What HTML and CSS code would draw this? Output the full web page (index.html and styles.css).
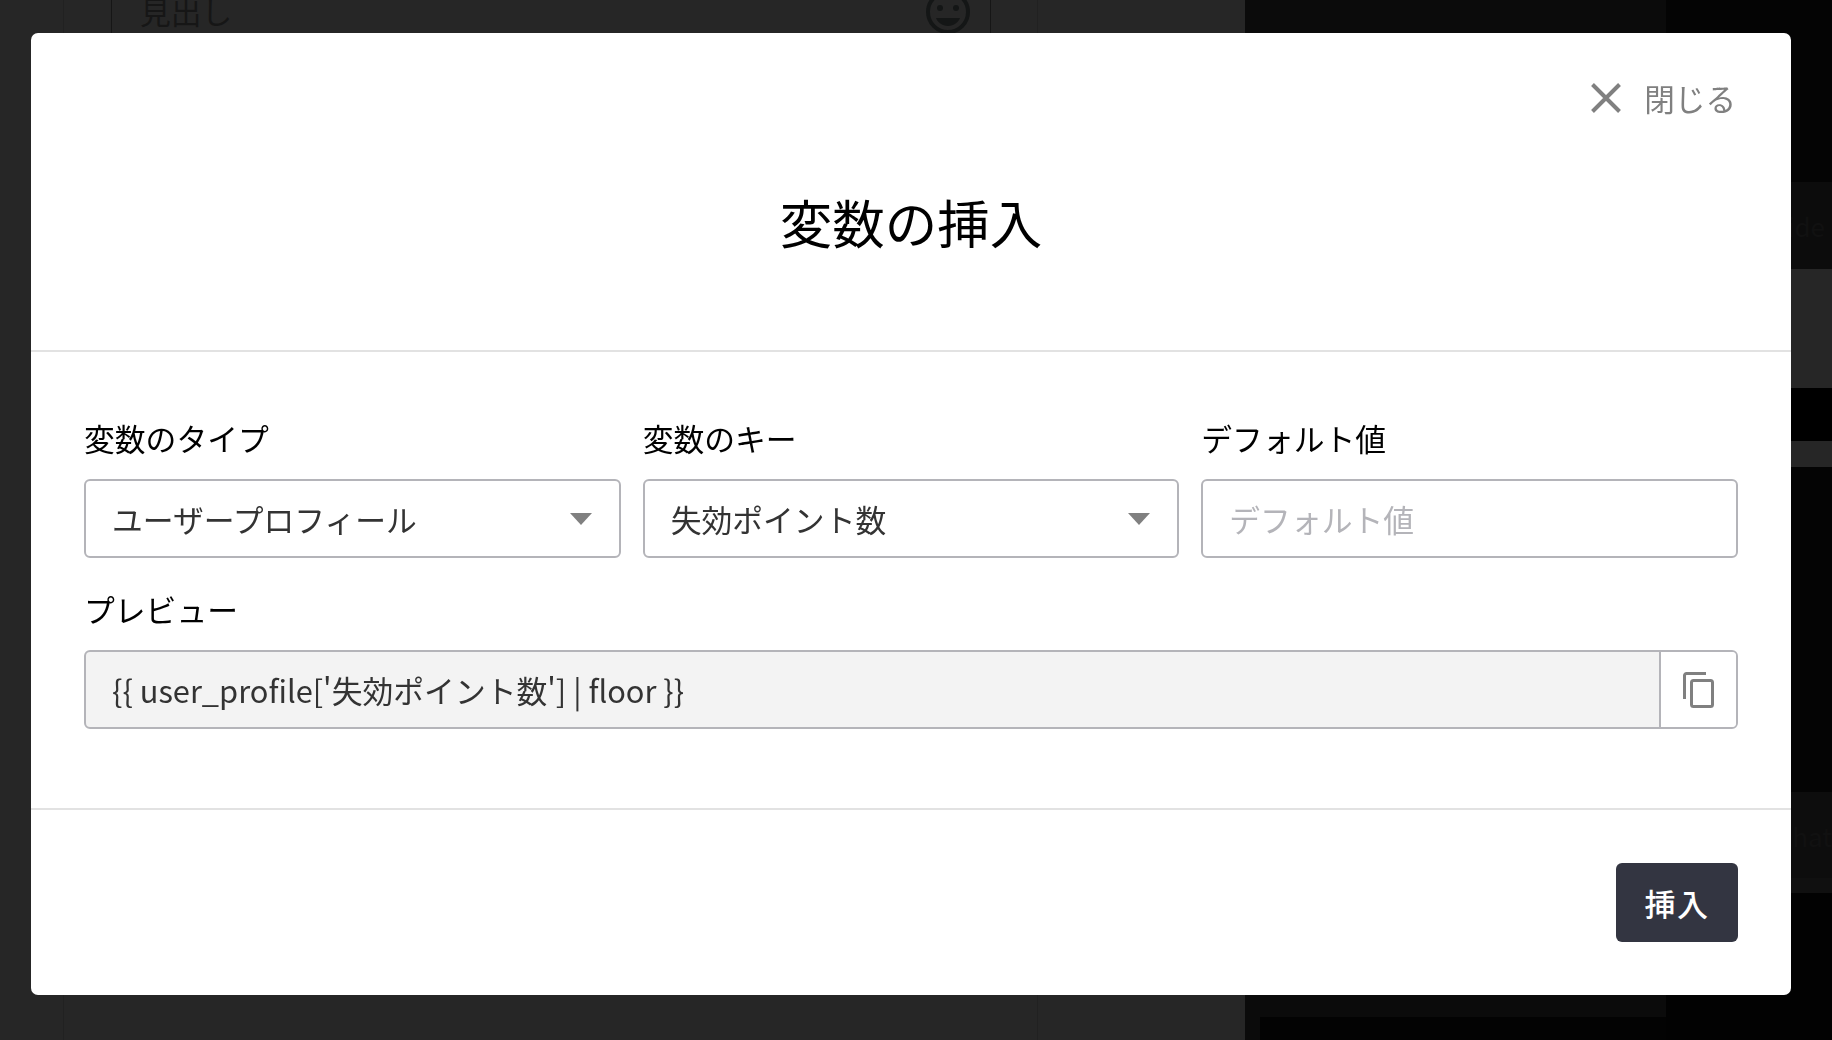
FILE: index.html
```html
<!DOCTYPE html>
<html lang="ja">
<head>
<meta charset="utf-8">
<title>変数の挿入</title>
<link rel="stylesheet" href="styles.css">
</head>
<body>
<div class="page">
  <main class="editor">
    <div class="editor-inner">
      <div class="editor-field">
        <span class="editor-text">見出し</span>
        <svg class="smiley" viewBox="0 0 44 44" width="44" height="44"><circle cx="22" cy="22" r="20" fill="none" stroke="#141616" stroke-width="4"/><circle cx="14" cy="18" r="3" fill="#141616"/><circle cx="30" cy="18" r="3" fill="#141616"/><path d="M10 28h24c-1.500 4-6 8-12 8s-10.500-4-12-8z" fill="#141616"/></svg>
      </div>
    </div>
  </main>
  <aside class="side">
    <div class="band b1"></div>
    <div class="band b2"><span class="ghost">ide</span></div>
    <div class="band b3"></div>
    <div class="band b4"></div>
    <div class="band b5"></div>
    <div class="band b6"></div>
    <div class="band b7"><span class="ghost ghost-wide">chat</span></div>
    <div class="band b8"></div>
    <div class="band b9"><div class="thumb"></div></div>
  </aside>
</div>

<section class="modal">
  <header class="modal-head">
    <button class="close" type="button">
      <svg viewBox="0 0 30 30" width="30" height="30"><path d="M1.500 1.500 28.500 28.500M28.500 1.500 1.500 28.500" stroke="#808080" stroke-width="4" fill="none"/></svg>
      <span>閉じる</span>
    </button>
    <h2 class="title">変数の挿入</h2>
  </header>
  <div class="modal-body">
    <div class="row">
      <div class="field">
        <label class="label">変数のタイプ</label>
        <div class="control select"><span class="value">ユーザープロフィール</span><i class="caret"></i></div>
      </div>
      <div class="field">
        <label class="label">変数のキー</label>
        <div class="control select"><span class="value">失効ポイント数</span><i class="caret"></i></div>
      </div>
      <div class="field">
        <label class="label">デフォルト値</label>
        <div class="control"><span class="value placeholder">デフォルト値</span></div>
      </div>
    </div>
    <div class="field preview">
      <label class="label">プレビュー</label>
      <div class="control group">
        <span class="value code">{{ user_profile['失効ポイント数'] | floor }}</span>
        <button class="copy" type="button">
          <svg viewBox="0 0 32 36" width="32" height="36"><path d="M23 1.500H3.500a2 2 0 0 0-2 2V27" fill="none" stroke="#808080" stroke-width="3"/><rect x="8.500" y="8.500" width="21" height="26" rx="2" fill="none" stroke="#808080" stroke-width="3"/></svg>
        </button>
      </div>
    </div>
  </div>
  <footer class="modal-foot">
    <button class="primary" type="button">挿入</button>
  </footer>
</section>
</body>
</html>
```

FILE: styles.css
```css
* { box-sizing: border-box; }
html, body { margin: 0; height: 100%; overflow: hidden; }
body {
  background: #262626;
  font-family: "Noto Sans CJK JP", "Noto Sans", sans-serif;
  font-size: 30.8px;
  color: #000;
}
.page {
  display: grid;
  grid-template-columns: 1245px 1fr;
  height: 1040px;
}
.editor { padding-left: 63px; }
.editor-inner {
  height: 1040px;
  width: 975px;
  border-left: 1px solid #212121;
  border-right: 1px solid #212121;
  padding: 0 46px 0 47px;
}
.editor-field {
  height: 33px;
  display: flex;
  justify-content: space-between;
  align-items: flex-end;
  border-left: 1px solid #161616;
  border-right: 1px solid #161616;
  padding: 0 20px 0 28px;
  overflow: hidden;
}
.editor-text { line-height: 44px; color: #161616; }
.smiley { flex: none; margin-bottom: -1px; }
.side { display: flex; flex-direction: column; background: #050505; overflow: hidden; }
.band { flex: none; display: flex; align-items: center; justify-content: flex-end; }
.ghost { color: #111; font-size: 26px; padding-right: 7px; }
.ghost-wide { padding-right: 0; }
.b1 { height: 182px; background: linear-gradient(90deg, #0b0b0b 421px, #040404 421px); }
.b2 { height: 87px; background: #0c0c0c; }
.b3 { height: 119px; background: #262626; }
.b4 { height: 53px; background: #000; }
.b5 { height: 26px; background: #262626; }
.b6 { height: 325px; background: #040404; }
.b7 { height: 86px; background: #0d0d0d; }
.b8 { height: 15px; background: #101010; }
.b9 {
  flex: 1;
  background: linear-gradient(90deg, #0b0b0b 421px, #020202 421px);
  justify-content: flex-start;
  align-items: flex-end;
  padding-left: 15px;
}
.thumb { width: 406px; height: 23px; background: #030303; }

.modal {
  position: fixed;
  left: 31px;
  top: 33px;
  width: 1760px;
  height: 962px;
  background: #fff;
  border-radius: 7px;
  display: flex;
  flex-direction: column;
}
.modal-head {
  height: 319px;
  flex: none;
  border-bottom: 2px solid #e2e2e2;
  padding: 0 55px;
  display: flex;
  flex-direction: column;
}
.close {
  align-self: flex-end;
  margin-top: 45px;
  border: 0;
  background: none;
  padding: 0;
  display: flex;
  align-items: center;
  gap: 23px;
  font: inherit;
  font-size: 30.6px;
  line-height: 40px;
  color: #808080;
}
.close svg { display: block; }
.title {
  margin: 67px 0 0;
  text-align: center;
  font-weight: 400;
  font-size: 52.5px;
  line-height: 72px;
}
.modal-body {
  height: 456px;
  flex: none;
  padding: 66px 53px 0;
  display: flex;
  flex-direction: column;
  gap: 31px;
}
.row {
  display: grid;
  grid-template-columns: repeat(3, 1fr);
  gap: 22px;
}
.field { display: flex; flex-direction: column; }
.label {
  line-height: 40px;
  margin-bottom: 21px;
}
.control {
  height: 79px;
  border: 2px solid #b4b4b9;
  border-radius: 6px;
  background: #fff;
  display: flex;
  align-items: center;
  padding: 0 27px 0 26px;
  color: #333;
}
.select { justify-content: space-between; }
.value { line-height: 40px; }
.placeholder { color: #b4b4b9; }
.caret {
  width: 0;
  height: 0;
  border-left: 11px solid transparent;
  border-right: 11px solid transparent;
  border-top: 12px solid #808080;
}
.group { padding: 0; overflow: hidden; background: #f3f3f3; }
.code { flex: 1; padding-left: 26px; }
.copy {
  flex: none;
  width: 77px;
  height: 100%;
  background: #fff;
  border: 0;
  border-left: 2px solid #b4b4b9;
  padding: 0;
  display: flex;
  align-items: center;
  justify-content: center;
}
.copy svg { display: block; }
.modal-foot {
  flex: 1;
  border-top: 2px solid #e2e2e2;
  padding: 53px 53px 0;
  display: flex;
  justify-content: flex-end;
  align-items: flex-start;
}
.primary {
  width: 122px;
  height: 79px;
  border: 0;
  border-radius: 6px;
  background: #333541;
  color: #fff;
  font: inherit;
  font-weight: 500;
  font-size: 31px;
  letter-spacing: 1.5px;
  padding: 0;
}
```
